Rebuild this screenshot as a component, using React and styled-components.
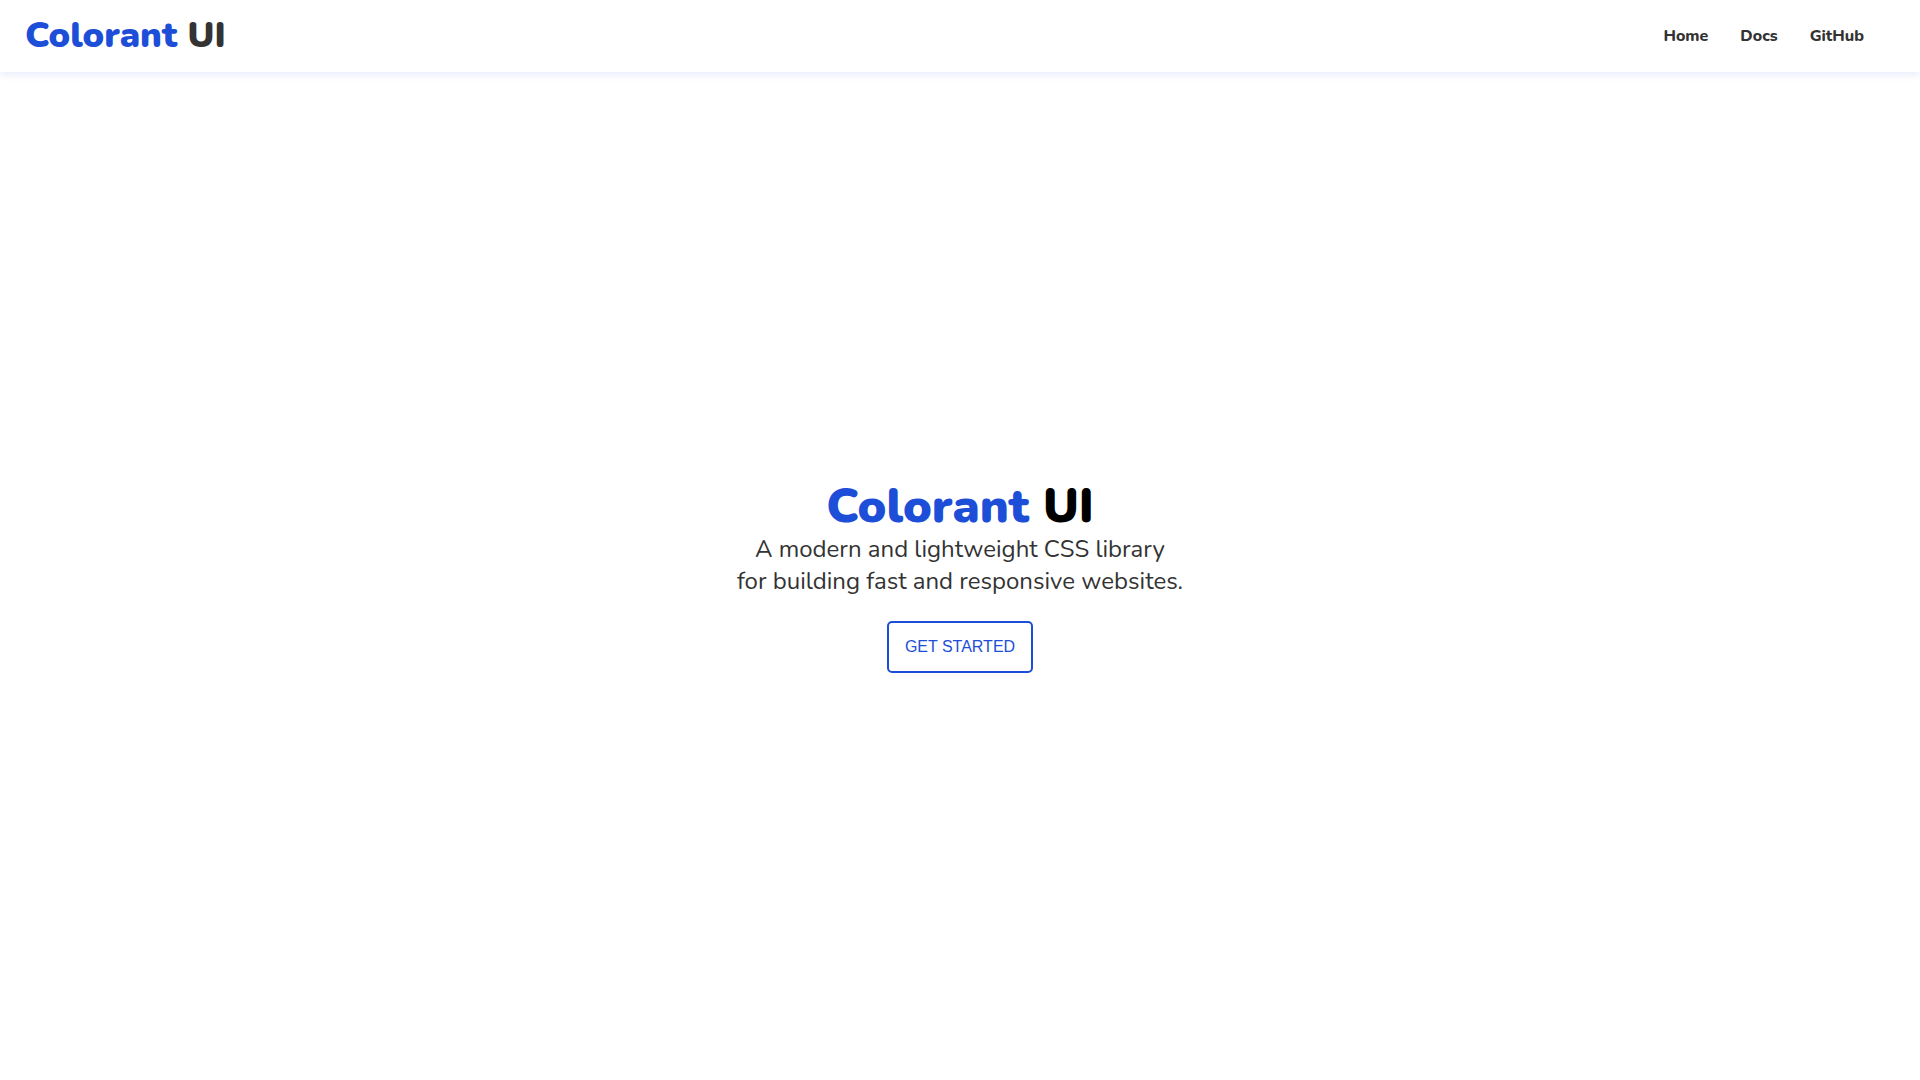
import React from "react";
import styled, { createGlobalStyle } from "styled-components";

const GlobalStyle = createGlobalStyle`
  * { box-sizing: border-box; }
  html, body { margin: 0; padding: 0; background: #ffffff; }
  body {
    font-family: "Nunito", "Lato", "Open Sans", "Noto Sans", sans-serif;
    color: #333333;
  }
`;

const Header = styled.header`
  height: 72px;
  display: flex;
  align-items: center;
  justify-content: space-between;
  padding: 0 40px 0 25px;
  background: #ffffff;
  box-shadow: 0 2px 8px rgba(29, 78, 216, 0.12);
  position: relative;
  z-index: 1;
`;

const Logo = styled.a`
  font-size: 36px;
  font-weight: 900;
  color: #333333;
  text-decoration: none;
  line-height: 1;
`;

const Accent = styled.span`
  color: #1d4ed8;
`;

const Nav = styled.nav`
  display: flex;
  align-items: center;
`;

const NavLink = styled.a`
  padding: 0 16px;
  font-size: 16px;
  font-weight: 800;
  color: #333333;
  text-decoration: none;
`;

const Hero = styled.main`
  min-height: calc(100vh - 72px);
  display: flex;
  flex-direction: column;
  align-items: center;
  justify-content: center;
  text-align: center;
`;

const Title = styled.h1`
  margin: 0;
  font-size: 48px;
  font-weight: 900;
  line-height: 53px;
  color: #000000;
`;

const Subtitle = styled.p`
  margin: 0 0 24px;
  font-size: 24px;
  line-height: 32px;
  color: #333333;
`;

const Button = styled.button`
  font-family: "Liberation Sans", Arial, sans-serif;
  font-size: 16px;
  line-height: 18px;
  color: #1d4ed8;
  background: #ffffff;
  border: 2px solid #1d4ed8;
  border-radius: 5px;
  padding: 15px 16px;
  height: 52px;
  cursor: pointer;
`;

export default function App() {
  return (
    <>
      <GlobalStyle />
      <Header>
        <Logo href="#">
          <Accent>Colorant</Accent> UI
        </Logo>
        <Nav>
          <NavLink href="#">Home</NavLink>
          <NavLink href="#">Docs</NavLink>
          <NavLink href="#">GitHub</NavLink>
        </Nav>
      </Header>
      <Hero>
        <Title>
          <Accent>Colorant</Accent> UI
        </Title>
        <Subtitle>
          A modern and lightweight CSS library
          <br />
          for building fast and responsive websites.
        </Subtitle>
        <Button>GET STARTED</Button>
      </Hero>
    </>
  );
}
